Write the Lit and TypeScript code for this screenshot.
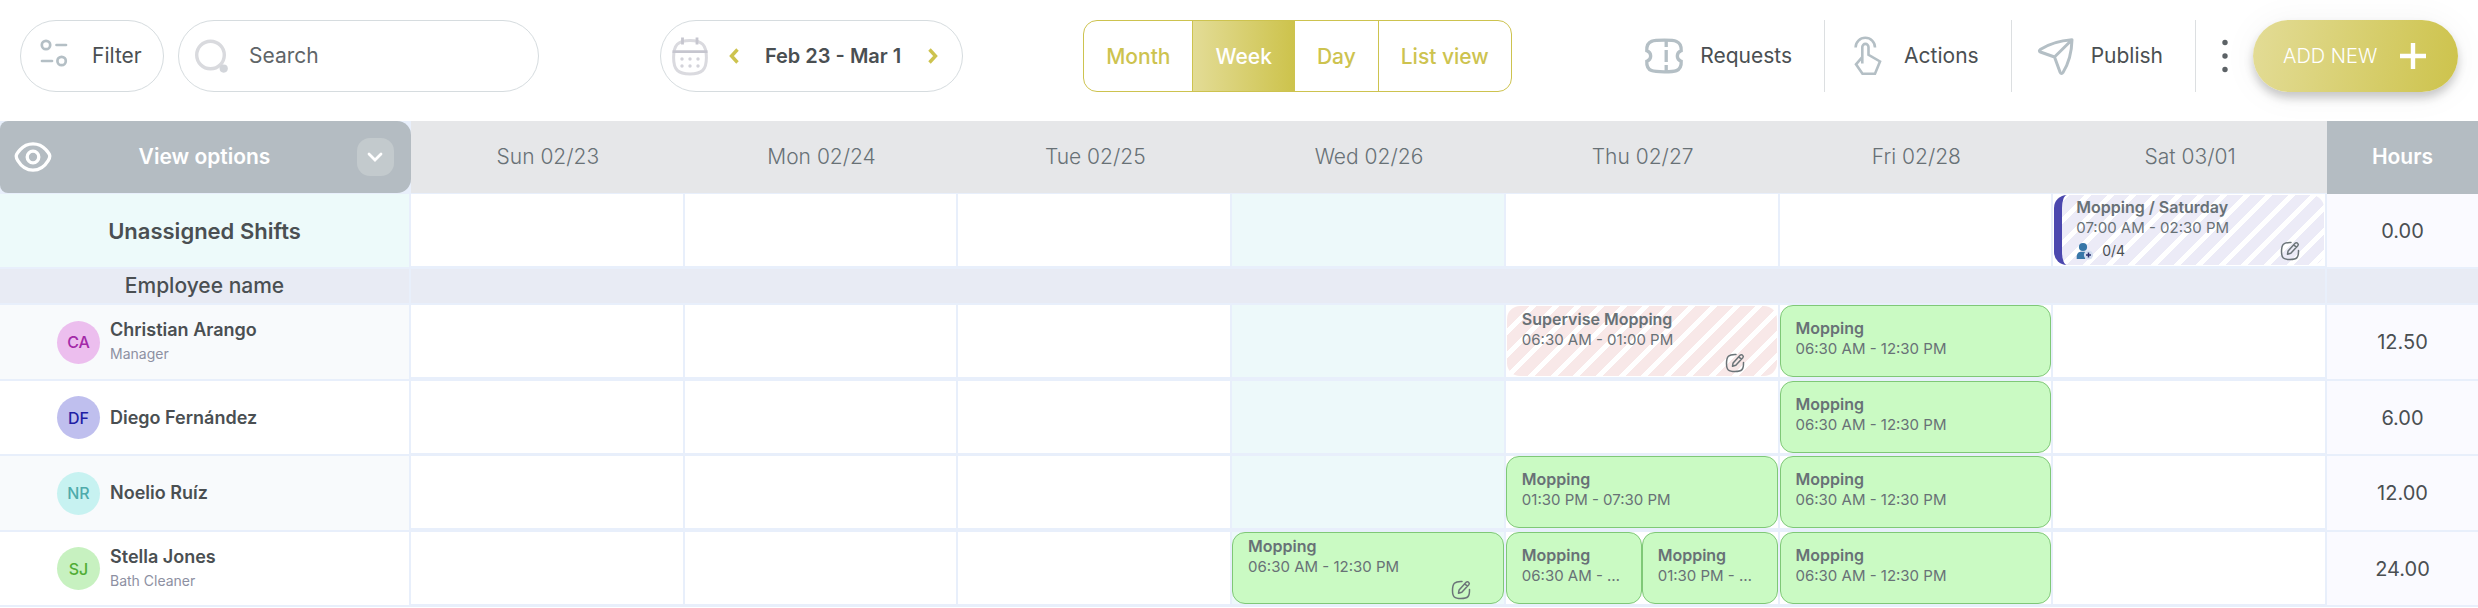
import { LitElement, html, css, svg, nothing } from 'lit';
import { customElement, state } from 'lit/decorators.js';
import { classMap } from 'lit/directives/class-map.js';

interface Shift {
  title: string;
  time: string;
  kind: 'open' | 'pending' | 'approved';
  edit?: boolean;
  filled?: string;
}

interface Employee {
  initials: string;
  name: string;
  role?: string;
  tone: string;
  hours: string;
  shifts: Record<number, Shift[]>;
}

const DAYS = ['Sun 02/23', 'Mon 02/24', 'Tue 02/25', 'Wed 02/26', 'Thu 02/27', 'Fri 02/28', 'Sat 03/01'];
const TODAY = 3;
const VIEWS = ['Month', 'Week', 'Day', 'List view'];

const mopping = (time: string, edit = false): Shift => ({ title: 'Mopping', time, kind: 'approved', edit });
const MORNING = '06:30 AM - 12:30 PM';
const EVENING = '01:30 PM - 07:30 PM';

const UNASSIGNED: Record<number, Shift[]> = {
  6: [{ title: 'Mopping / Saturday', time: '07:00 AM - 02:30 PM', kind: 'open', edit: true, filled: '0/4' }],
};

const EMPLOYEES: Employee[] = [
  {
    initials: 'CA', name: 'Christian Arango', role: 'Manager', tone: 'pink', hours: '12.50',
    shifts: {
      4: [{ title: 'Supervise Mopping', time: '06:30 AM - 01:00 PM', kind: 'pending', edit: true }],
      5: [mopping(MORNING)],
    },
  },
  { initials: 'DF', name: 'Diego Fernández', tone: 'blue', hours: '6.00', shifts: { 5: [mopping(MORNING)] } },
  {
    initials: 'NR', name: 'Noelio Ruíz', tone: 'cyan', hours: '12.00',
    shifts: { 4: [mopping(EVENING)], 5: [mopping(MORNING)] },
  },
  {
    initials: 'SJ', name: 'Stella Jones', role: 'Bath Cleaner', tone: 'green', hours: '24.00',
    shifts: { 3: [mopping(MORNING, true)], 4: [mopping(MORNING), mopping(EVENING)], 5: [mopping(MORNING)] },
  },
];

const icon = (w: number, h: number, body: unknown) =>
  html`<svg width=${w} height=${h} viewBox="0 0 ${w} ${h}" fill="none" aria-hidden="true">${body}</svg>`;

const filterIcon = icon(28, 34, svg`<g stroke="#b4bfc5" stroke-width="2.7" stroke-linecap="round">
  <circle cx="6" cy="6" r="4.2"/><path d="M16.5 6h9.5M2 22h10"/><circle cx="21.6" cy="22" r="4.2"/></g>`);
const searchIcon = icon(34, 34, svg`<circle cx="15.5" cy="16" r="13.8" stroke="#d9dade" stroke-width="3.4"/>
  <circle cx="28.7" cy="29.6" r="4.1" fill="#d2d5da"/>`);
const calendarIcon = icon(38, 40, svg`
  <path d="M19 4.5C7 4.500 2.600 9 2.600 21.500S7 38 19 38 35.400 34 35.400 21.500 31 4.500 19 4.500z" stroke="#dadadf" stroke-width="3"/>
  <path d="M1.500 15.700h35M11.500 1.500v7M26 1.500v7" stroke="#c6c6cf" stroke-width="2.800"/>
  <g fill="#d3d3da"><circle cx="11" cy="23" r="1.700"/><circle cx="19" cy="23" r="1.700"/><circle cx="27" cy="23" r="1.700"/>
  <circle cx="11" cy="30" r="1.700"/><circle cx="19" cy="30" r="1.700"/><circle cx="27" cy="30" r="1.700"/></g>`);
const prevIcon = icon(10, 16, svg`<path d="M8.500 1.500 2.500 8l6 6.500" stroke="#cdc34f" stroke-width="3.400"/>`);
const nextIcon = icon(10, 16, svg`<path d="M1.500 1.500 7.500 8l-6 6.500" stroke="#cdc34f" stroke-width="3.400"/>`);
const requestsIcon = icon(40, 36, svg`<g stroke="#b4bfc5" stroke-width="3.300">
  <path d="M20.500 2.200c-6 0-10.500.2-13 1.200-3.600 1.500-5 4.300-4.700 9.300 2.400.8 3.900 2.800 3.900 5.300s-1.500 4.500-3.900 5.300c-.3 5 1.100 7.800 4.700 9.300 2.500 1 7 1.200 13 1.200s9.500-.2 12-1.200c3.600-1.500 5-4.300 4.700-9.300-2.400-.8-3.900-2.800-3.900-5.300s1.500-4.500 3.900-5.300c.3-5-1.100-7.800-4.700-9.300-2.500-1-6-1.200-12-1.200z"/>
  <path d="M22.200 3v6M22.200 12v12M22.200 27v6"/></g>`);
const actionsIcon = icon(40, 40, svg`<g stroke="#b4bfc5" stroke-width="2.600">
  <path d="M7.600 11.500a9.600 9.600 0 1 1 19.400 0"/>
  <path d="M14.300 27.500V11a3 3 0 0 1 6.200 0v7.800l11.500 6.700-5 12.300H14.500L8 28.300l6-7"/></g>`);
const publishIcon = icon(40, 40, svg`<path d="M37 3.800C26 4.600 13 8.500 5.200 13.600c-1.200.9-1.100 1.900.2 2.400L19.500 21l5.600 15.200c.6 1.600 1.900 1.700 2.900.3C33 28.500 36.700 16 37 3.800zM19.500 21 37 3.800" stroke="#b4bfc5" stroke-width="3" stroke-linejoin="round"/>`);
const moreIcon = icon(6, 34, svg`<g fill="#5c6266"><circle cx="3" cy="3.500" r="2.700"/><circle cx="3" cy="17" r="2.700"/><circle cx="3" cy="30.500" r="2.700"/></g>`);
const plusIcon = icon(26, 26, svg`<path d="M13 0v26M0 13h26" stroke="#fff" stroke-width="4.400"/>`);
const eyeIcon = icon(38, 32, svg`<g stroke="#fff" stroke-width="3.300">
  <path d="M19 2.800c-5 0-9.600 2.300-12.800 5.900-3.900 4.400-5.400 6.200-2.400 11C7.300 25.500 12.700 29.200 19 29.200s11.700-3.700 15.200-9.500c3-4.800 1.500-6.600-2.400-11C28.600 5.100 24 2.800 19 2.800z"/>
  <circle cx="19" cy="16" r="5.800"/></g>`);
const downIcon = icon(16, 10, svg`<path d="m2 2 6 6 6-6" stroke="#fff" stroke-width="2.800" stroke-linecap="round"/>`);
const editIcon = icon(20, 20, svg`<g stroke="#6b7478" stroke-width="1.500" stroke-linecap="round" stroke-linejoin="round">
  <path d="M11 1.500C3.500 1.200 1.500 3.500 1.500 10.500c0 6.500 2 8 8.500 8 7 0 8.700-2 8.500-9"/>
  <path d="m7.500 13.200.6-3.300 7-7.600c.8-.8 1.700-.9 2.500-.1.900.8.900 1.700.2 2.500l-7 7.600-3.300.9zM13.800 3.900l2.600 2.400"/></g>`);
const staffIcon = icon(18, 18, svg`<g fill="#3877a8"><circle cx="7" cy="5" r="4.100"/><path d="M.7 17v-2.500c0-3 2-4.700 4.500-4.700h4v7.200z"/></g>
  <circle cx="12.500" cy="13" r="4.600" fill="#d3def0"/><path d="M12.500 10.500v5M10 13h5" stroke="#2d3270" stroke-width="1.500"/>`);

@customElement('app-root')
export class AppRoot extends LitElement {
  @state() private view = 'Week';

  static styles = css`
    :host {
      display: block;
      font-family: Inter, 'Noto Sans', sans-serif;
      font-size: 21px;
      line-height: 28px;
      color: #4a4f52;
      background: #fff;
    }
    *, *::before { box-sizing: border-box; }
    button, input { font: inherit; color: inherit; background: none; border: 0; margin: 0; padding: 0; }
    button { cursor: pointer; }
    svg { display: block; flex: none; }

    .toolbar {
      display: flex;
      justify-content: space-between;
      align-items: center;
      padding: 20px 20px 29px;
    }
    .group { display: flex; align-items: center; }
    .left { gap: 14px; }
    .pill {
      display: flex;
      align-items: center;
      height: 72px;
      border: 1px solid #d6dcdf;
      border-radius: 36px;
    }
    .filter { width: 144px; gap: 24px; padding: 0 20px 0 19px; }
    .search { width: 361px; gap: 20px; padding: 0 20px 0 16px; }
    .search input { flex: 1; min-width: 0; outline: none; }
    .search input::placeholder { color: #5f6568; opacity: 1; }
    .range { width: 303px; padding: 0 24px 0 10px; }
    .step { display: flex; padding: 8px 0; margin-left: 20px; }
    .dates { flex: 1; text-align: center; font-size: 20px; font-weight: 600; }
    .range .next { margin-left: 0; }

    .views { display: flex; height: 72px; border: 1px solid #cdc34f; border-radius: 14px; overflow: hidden; }
    .view { padding: 2px 22px 0; color: #cdc34f; font-weight: 500; }
    .view + .view { border-left: 1px solid #cdc34f; }
    .view.on { color: #fff; background: linear-gradient(90deg, #e3dc96, #cdc34c); }

    .action {
      display: flex;
      align-items: center;
      gap: 16px;
      height: 72px;
      padding: 0 32px 0 23px;
      border-right: 1px solid #dcdfe1;
    }
    .action:first-child { padding-left: 12px; }
    .more { display: flex; justify-content: center; width: 57px; }
    .add {
      display: flex;
      align-items: center;
      justify-content: space-between;
      width: 205px;
      height: 72px;
      padding: 0 32px 0 30px;
      border-radius: 36px;
      color: #fff;
      font-size: 20px;
      font-weight: 300;
      background: linear-gradient(100deg, #e3dc96, #cdc34c);
      box-shadow: 0 6px 10px rgba(0, 0, 0, 0.2), 0 2px 36px rgba(0, 0, 0, 0.05);
    }

    table { width: 100%; table-layout: fixed; border-collapse: separate; border-spacing: 0; }
    .col-name { width: 411px; }
    .col-hours { width: 151px; }
    th, td { padding: 0; font-weight: 400; border: 0 solid #e8effb; }
    thead th { height: 73px; border-bottom-width: 1px; background: #e6e7e9; color: #687176; font-weight: 300; }
    thead .corner { background: #e8effb; }
    thead .total { background: #b4bcc2; color: #fff; font-weight: 600; border-bottom-color: #b4bcc2; }
    .options {
      display: flex;
      align-items: center;
      justify-content: space-between;
      width: 100%;
      height: 72px;
      padding: 0 17px 0 14px;
      border-radius: 8px 14px 14px 8px;
      background: #b4bcc2;
      color: #fff;
      font-weight: 600;
    }
    .drop {
      display: flex;
      align-items: center;
      justify-content: center;
      width: 37px;
      height: 38px;
      border-radius: 13px;
      background: #c3cacd;
    }

    tbody th, tbody td { border-right-width: 2px; border-bottom-width: 3px; }
    tbody th { border-bottom-width: 2px; }
    tbody .total { border-right-width: 0; border-bottom-width: 2px; background: #fafaff; font-size: 20px; text-align: center; }
    tbody .today { background: #edf9fa; }
    .open-row > * { height: 75px; }
    .open-row th { background: #edfafa; font-size: 22px; font-weight: 600; }
    .band > * { height: 36px; background: #e8ebf4; font-weight: 500; border-bottom-width: 2px; }
    .band .total { background: #e8ebf4; }
    .person > * { height: 75px; }
    .person.odd > * { height: 76px; }
    .person.odd td { border-bottom-width: 4px; }
    .person.odd th { background: #f8fafc; }
    .person .total, .person.odd .total { border-bottom-width: 2px; }

    .who { display: flex; align-items: center; gap: 10px; padding-left: 57px; text-align: left; }
    .avatar { display: grid; place-items: center; width: 43px; height: 43px; border-radius: 50%; font-size: 16px; font-weight: 500; }
    .pink { background: #ecbeee; color: #a32aa8; }
    .blue { background: #bfbfee; color: #211ea5; }
    .cyan { background: #c7f2f1; color: #4fabab; }
    .green { background: #c7f1c0; color: #50ad35; }
    .name { display: block; font-size: 18px; line-height: 24px; font-weight: 600; }
    .role { display: block; font-size: 14px; line-height: 24px; color: #8d90a2; }

    .cell { display: flex; height: 72px; }
    .shift {
      flex: 1;
      min-width: 0;
      padding: 12px 16px 0 15px;
      border: 1px solid #7fc877;
      border-radius: 13px;
      background: #cafac3;
      color: #687176;
      font-size: 16px;
      line-height: 20px;
    }
    .shift.editable { padding: 3px 32px 0 15px; }
    .shift.pending, .shift.open { margin: 1px; border: 0; padding-left: 15px; background: repeating-linear-gradient(135deg, #fff 0 5px, #f8e8e8 5px 16px); }
    .shift.open {
      padding: 2px 24px 0 14px;
      border-left: 8px solid #4b47ae;
      background: repeating-linear-gradient(135deg, #fff 0 5px, #ecebf7 5px 16px);
    }
    .title, .time { overflow: hidden; white-space: nowrap; text-overflow: ellipsis; }
    .title { font-weight: 600; }
    .time { font-size: 15px; line-height: 22px; }
    .foot { display: flex; align-items: center; height: 24px; }
    .foot .edit { margin-left: auto; }
    .filled { display: flex; align-items: center; gap: 8px; font-size: 14px; color: #4a4f52; }
  `;

  private shift(s: Shift) {
    return html`<div class="shift ${s.kind} ${s.edit ? 'editable' : ''}">
      <div class="title">${s.title}</div>
      <div class="time">${s.time}</div>
      ${s.edit
        ? html`<div class="foot">
            ${s.filled ? html`<span class="filled">${staffIcon}${s.filled}</span>` : nothing}
            <button class="edit" aria-label="Edit shift">${editIcon}</button>
          </div>`
        : nothing}
    </div>`;
  }

  private days(shifts: Record<number, Shift[]>) {
    return DAYS.map((_, i) => html`<td class=${classMap({ today: i === TODAY })}>
      <div class="cell">${(shifts[i] ?? []).map((s) => this.shift(s))}</div>
    </td>`);
  }

  render() {
    return html`
      <header class="toolbar">
        <div class="group left">
          <button class="pill filter">${filterIcon}Filter</button>
          <label class="pill search">${searchIcon}<input type="text" placeholder="Search" aria-label="Search" /></label>
        </div>
        <div class="pill range">
          ${calendarIcon}
          <button class="step" aria-label="Previous week">${prevIcon}</button>
          <span class="dates">Feb 23 - Mar 1</span>
          <button class="step next" aria-label="Next week">${nextIcon}</button>
        </div>
        <div class="views" role="group" aria-label="Calendar view">
          ${VIEWS.map((v) => html`<button
            class=${classMap({ view: true, on: v === this.view })}
            aria-pressed=${v === this.view}
            @click=${() => (this.view = v)}
          >${v}</button>`)}
        </div>
        <div class="group">
          <button class="action">${requestsIcon}Requests</button>
          <button class="action">${actionsIcon}Actions</button>
          <button class="action">${publishIcon}Publish</button>
          <button class="more" aria-label="More">${moreIcon}</button>
          <button class="add">ADD NEW${plusIcon}</button>
        </div>
      </header>
      <table>
        <colgroup><col class="col-name" />${DAYS.map(() => html`<col />`)}<col class="col-hours" /></colgroup>
        <thead>
          <tr>
            <th class="corner"><button class="options">${eyeIcon}<span>View options</span><span class="drop">${downIcon}</span></button></th>
            ${DAYS.map((d) => html`<th scope="col">${d}</th>`)}
            <th class="total" scope="col">Hours</th>
          </tr>
        </thead>
        <tbody>
          <tr class="open-row">
            <th scope="row">Unassigned Shifts</th>
            ${this.days(UNASSIGNED)}
            <td class="total">0.00</td>
          </tr>
          <tr class="band"><th scope="row">Employee name</th><td colspan="7"></td><td class="total"></td></tr>
          ${EMPLOYEES.map((e, i) => html`<tr class="person ${i % 2 ? '' : 'odd'}">
            <th scope="row">
              <div class="who">
                <span class="avatar ${e.tone}">${e.initials}</span>
                <span><span class="name">${e.name}</span>${e.role ? html`<span class="role">${e.role}</span>` : nothing}</span>
              </div>
            </th>
            ${this.days(e.shifts)}
            <td class="total">${e.hours}</td>
          </tr>`)}
        </tbody>
      </table>
    `;
  }
}
